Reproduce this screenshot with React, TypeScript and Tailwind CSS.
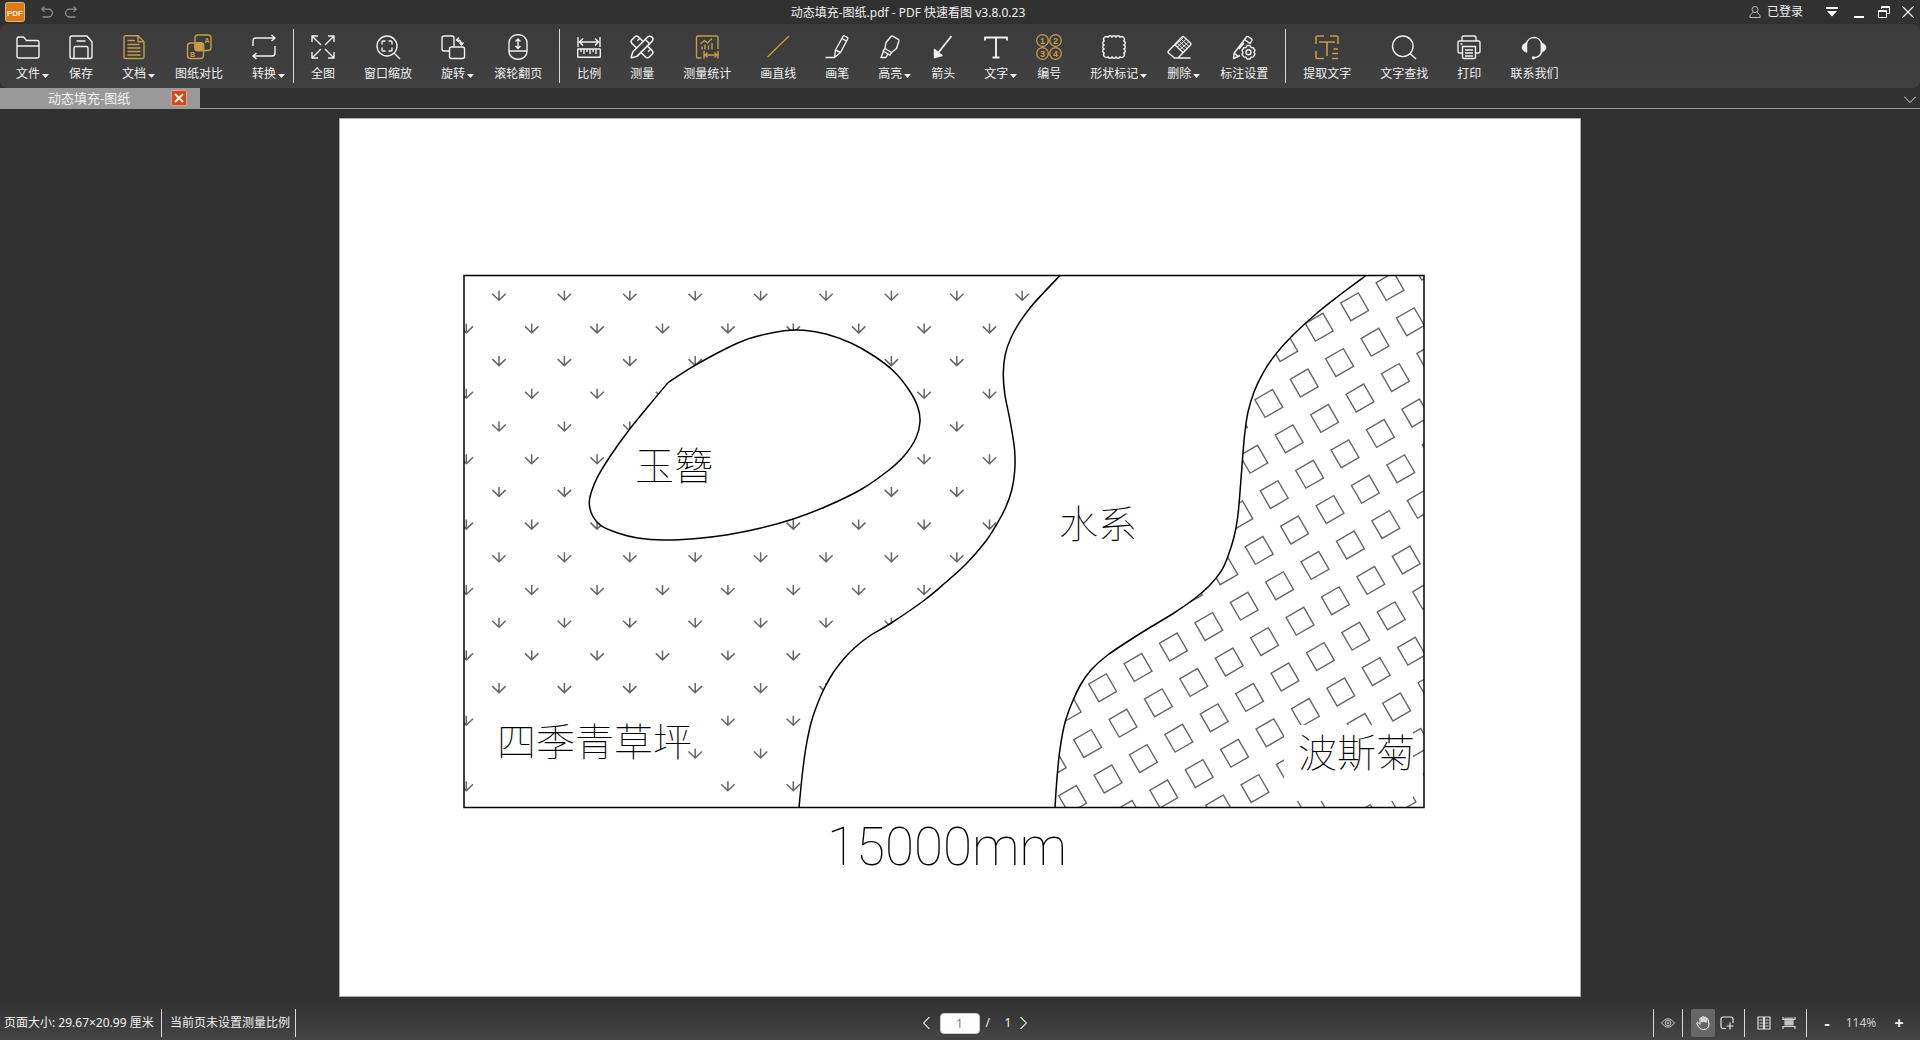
import React, { useState } from "react";
import { PencilRuler } from "lucide-react";
import clsx from "clsx";

type Point = [number, number];

interface Tool {
  label: string;
  icon: React.ReactNode;
  gold?: boolean;
  menu?: boolean;
}

const Icon: React.FC<{ children: React.ReactNode }> = ({ children }) => (
  <svg
    viewBox="0 0 26 26"
    className="h-[26px] w-[26px]"
    fill="none"
    stroke="currentColor"
    strokeWidth="1.4"
    strokeLinejoin="round"
    aria-hidden="true"
  >
    {children}
  </svg>
);

const fileTools: Tool[] = [
  {
    label: "文件",
    menu: true,
    icon: (
      <Icon>
        <path d="M2 22V5a2 2 0 0 1 2-2h4.500l3 3.500H22a2 2 0 0 1 2 2V22a2 2 0 0 1-2 2H4a2 2 0 0 1-2-2zM2 12h22" />
      </Icon>
    ),
  },
  {
    label: "保存",
    icon: (
      <Icon>
        <path d="M4 2h15l5 6v14.500a2 2 0 0 1-2 2H4a2 2 0 0 1-2-2V4a2 2 0 0 1 2-2zM6 24.500V14a1.500 1.500 0 0 1 1.500-1.500h11A1.500 1.500 0 0 1 20 14v10.500M8.500 7h9" />
      </Icon>
    ),
  },
  {
    label: "文档",
    gold: true,
    menu: true,
    icon: (
      <Icon>
        <path d="M4.500 1.700H17l6 6V23a1.500 1.500 0 0 1-1.500 1.500h-17A1.500 1.500 0 0 1 3 23V3.200a1.500 1.500 0 0 1 1.500-1.500zM17 1.700v6h6M6.500 6.500H14M6.500 10.500h12M6.500 14h13M6.500 17.500h13M6.500 21h13" />
      </Icon>
    ),
  },
  {
    label: "图纸对比",
    gold: true,
    icon: (
      <Icon>
        <rect x="9" y="1" width="16" height="15.500" rx="3" />
        <rect x="1.500" y="9" width="16" height="15.500" rx="3" />
        <rect x="9" y="9" width="8.500" height="7.500" rx="2" fill="currentColor" />
        <text x="18.500" y="8.500" fontSize="7" fontWeight="700" fill="currentColor" stroke="none" fontFamily="Liberation Sans, sans-serif">
          A
        </text>
        <text x="4" y="22.500" fontSize="7" fontWeight="700" fill="currentColor" stroke="none" fontFamily="Liberation Sans, sans-serif">
          B
        </text>
      </Icon>
    ),
  },
  {
    label: "转换",
    menu: true,
    icon: (
      <Icon>
        <path d="M2 12V7a3 3 0 0 1 3-3h19M20.500 1L24 4l-3.500 3M24 12v7a3 3 0 0 1-3 3H2M5.500 19L2 22l3.500 3" />
      </Icon>
    ),
  },
];

const viewTools: Tool[] = [
  {
    label: "全图",
    icon: (
      <Icon>
        <path d="M2 8V2h6M2 2l9 9M18 2h6v6M24 2l-9 9M2 18v6h6M2 24l9-9M24 18v6h-6M24 24l-9-9" />
      </Icon>
    ),
  },
  {
    label: "窗口缩放",
    icon: (
      <Icon>
        <circle cx="12" cy="12" r="10" />
        <path d="M19 19l6 6M7 10.500V8a1 1 0 0 1 1-1h2.500M13.500 7H16a1 1 0 0 1 1 1v2.500M17 13.500V16a1 1 0 0 1-1 1h-2.500M10.500 17H8a1 1 0 0 1-1-1v-2.500" />
      </Icon>
    ),
  },
  {
    label: "旋转",
    menu: true,
    icon: (
      <Icon>
        <path d="M9 17H4a2 2 0 0 1-2-2V4a2 2 0 0 1 2-2h8a2 2 0 0 1 2 2v8.500" />
        <rect x="9.500" y="13" width="15" height="11.500" rx="2" />
        <path d="M17 6c3 0 4.500 1.500 4.500 4.500M19 3.500L16.500 6 19 8M19.500 8.500l2 2.500 2-2.500" />
      </Icon>
    ),
  },
  {
    label: "滚轮翻页",
    icon: (
      <Icon>
        <rect x="4" y="0.800" width="18" height="24.400" rx="8" />
        <path d="M4 17h18M13 5v9.500M10.500 7.500L13 5l2.500 2.500M10.500 12l2.500 2.500 2.500-2.500" />
      </Icon>
    ),
  },
];

const markTools: Tool[] = [
  {
    label: "比例",
    icon: (
      <Icon>
        <path d="M2 3v10M24 3v10M3.500 8h19M7 4.500L3.500 8 7 11.500M19 4.500L22.500 8 19 11.500" />
        <rect x="1.700" y="15" width="22.600" height="8.300" rx="0.500" />
        <path d="M5 15v3M8 15v5M11 15v3M14 15v5M17 15v3M20 15v5" />
      </Icon>
    ),
  },
  {
    label: "测量",
    icon: <PencilRuler size={26} strokeWidth={1.4} aria-hidden="true" />,
  },
  {
    label: "测量统计",
    gold: true,
    icon: (
      <Icon>
        <path d="M7.500 24H4a1.500 1.500 0 0 1-1.500-1.500V3.500A1.500 1.500 0 0 1 4 2h18.500A1.500 1.500 0 0 1 24 3.500V15M6.500 10l4-3.500 3 2.500 4.500-4.500M8 12.500v3M11 10.500v5M14.500 11.500v4M18 9v6.500" />
        <path d="M10 17v7.500M24 17v7.500M11 21h12M13.500 18.500L11 21l2.500 2.500M20.500 18.500L23 21l-2.500 2.500" />
      </Icon>
    ),
  },
  {
    label: "画直线",
    gold: true,
    icon: (
      <Icon>
        <path d="M2.500 23L24 2" />
      </Icon>
    ),
  },
  {
    label: "画笔",
    icon: (
      <Icon>
        <path d="M1.500 23.500h9l1-7.500 7.500-13.500a1.200 1.200 0 0 1 1.600-.5l2.600 1.400a1.200 1.200 0 0 1 .5 1.600L16.500 18.500l-6 5M11.500 16l5 2.500M18 4.500l5 2.800" />
      </Icon>
    ),
  },
  {
    label: "高亮",
    menu: true,
    icon: (
      <Icon>
        <path d="M8 14.500l1-6L14 2.500a1.500 1.500 0 0 1 1.800-.4l5.400 3.200a1.500 1.500 0 0 1 .7 1.700l-2.400 7.500-5 4zM8 14.500l6.500 4-1.500 2.700-7-4.200zM6.500 17.500L4 23.500h5l1.800-3.500" />
      </Icon>
    ),
  },
  {
    label: "箭头",
    icon: (
      <Icon>
        <path d="M21.500 2L8 19" strokeWidth="1.800" />
        <path d="M4.500 23.500V15.500l7.500 6z" fill="currentColor" />
      </Icon>
    ),
  },
  {
    label: "文字",
    menu: true,
    icon: (
      <Icon>
        <path d="M2 6.500V3.500h22v3M13 3.500v20M9.500 23.500h7" strokeWidth="1.900" />
      </Icon>
    ),
  },
  {
    label: "编号",
    gold: true,
    icon: (
      <Icon>
        {["1", "2", "3", "4"].map((n, i) => {
          const cx = i % 2 ? 19.5 : 6.5;
          const cy = i > 1 ? 19.5 : 6.5;
          return (
            <g key={n}>
              <circle cx={cx} cy={cy} r="5.800" strokeWidth="1.300" />
              <text
                x={cx}
                y={cy + 3}
                textAnchor="middle"
                fontSize="9"
                fontWeight="700"
                fill="currentColor"
                stroke="none"
                fontFamily="Liberation Sans, sans-serif"
              >
                {n}
              </text>
            </g>
          );
        })}
      </Icon>
    ),
  },
  {
    label: "形状标记",
    menu: true,
    icon: (
      <Icon>
        <path d="M3.200 7A2.700 2.700 0 0 1 7 3.200a2.100 2.100 0 0 1 4 0a2.100 2.100 0 0 1 4 0a2.100 2.100 0 0 1 4 0A2.700 2.700 0 0 1 22.800 7a2.100 2.100 0 0 1 0 4a2.100 2.100 0 0 1 0 4a2.100 2.100 0 0 1 0 4A2.700 2.700 0 0 1 19 22.800a2.100 2.100 0 0 1-4 0a2.100 2.100 0 0 1-4 0a2.100 2.100 0 0 1-4 0A2.700 2.700 0 0 1 3.200 19a2.100 2.100 0 0 1 0-4a2.100 2.100 0 0 1 0-4a2.100 2.100 0 0 1 0-4z" />
      </Icon>
    ),
  },
  {
    label: "删除",
    menu: true,
    icon: (
      <Icon>
        <path d="M8.500 24l-6-5a1.500 1.500 0 0 1 0-2L16 3a1.500 1.500 0 0 1 2 0l6.500 6a1.500 1.500 0 0 1 0 2L12 24H7.500M12 24h12.500M8.500 10.500l8.500 8" />
        <path
          d="M11 9l8 7.500M13 7l8 7.500M15 5l8 7.500M20 5.500L11.500 13M22.500 8L14 15.500M17 4L9.500 11"
          strokeWidth="1"
        />
      </Icon>
    ),
  },
  {
    label: "标注设置",
    icon: (
      <Icon>
        <path d="M9 21.500l-2 1-4.500 2 .7-5.500L15.500 3a1.500 1.500 0 0 1 2-.3l3 2.200a1.500 1.500 0 0 1 .3 2L19 9.500M3.200 19l4 3.500M13.500 5.500l5.500 4M13 9L8 15" />
        <path d="M16 11.500h3l1 2 2.200.2 1.800 2.800-1 1.800 1 1.900-1.800 2.700-2.200.2-1 1.900h-3l-1-1.900-2.200-.2-1.800-2.700 1-1.900-1-1.800 1.800-2.800 2.200-.2z" />
        <circle cx="17.500" cy="18.200" r="2.500" />
      </Icon>
    ),
  },
];

const textTools: Tool[] = [
  {
    label: "提取文字",
    gold: true,
    icon: (
      <Icon>
        <path
          d="M2 10V3.500A1.500 1.500 0 0 1 3.500 2H10M16 2h6.500A1.500 1.500 0 0 1 24 3.500V10M2 17v6a1.500 1.500 0 0 0 1.500 1.500H10M5 8h16M13 8v14M19.500 15H24M18 19.500h6M18 24.500h6"
          strokeWidth="1.600"
        />
      </Icon>
    ),
  },
  {
    label: "文字查找",
    icon: (
      <Icon>
        <circle cx="11.800" cy="12.300" r="10.300" />
        <path d="M19 19.500l6 5.500" />
      </Icon>
    ),
  },
  {
    label: "打印",
    icon: (
      <Icon>
        <path d="M6 7V3.500A1.500 1.500 0 0 1 7.500 2h11A1.500 1.500 0 0 1 20 3.500V7M6 19H3.500A1.500 1.500 0 0 1 2 17.500v-9A1.500 1.500 0 0 1 3.500 7h19A1.500 1.500 0 0 1 24 8.500v9a1.500 1.500 0 0 1-1.500 1.500H20M6.500 12.500h13V23a1.500 1.500 0 0 1-1.500 1.500H8A1.500 1.500 0 0 1 6.500 23zM9 16h8M9 19h8M9 22h8M4.500 10h2" />
      </Icon>
    ),
  },
  {
    label: "联系我们",
    icon: (
      <Icon>
        <path d="M5.500 9.500a7.700 7.700 0 0 1 15 0v7c0 4.500-3 7-8 7.500" />
        <path d="M6 8.500v10C2.500 17.500 1 15.500 1 13.500S2.500 9.500 6 8.500zM20 8.500v10c3.500-1 5-3 5-5s-1.500-4-5-5z" fill="currentColor" strokeWidth="0.500" />
        <circle cx="12.500" cy="23.800" r="1.400" fill="currentColor" strokeWidth="0.500" />
      </Icon>
    ),
  },
];

// Outlines on the sheet, in sheet units
const leftBank: Point[] = [
  [1059, 275.5], [1041.7, 293.7], [1030, 306.7], [1019, 321.7], [1010, 337.7],
  [1004.3, 354.3], [1002.3, 373.3], [1003.7, 393.3], [1008.3, 416.7], [1011, 431.7],
  [1013.7, 451], [1013.7, 471], [1010.7, 490.3], [1004.7, 507.3], [996, 523.7],
  [984, 542.3], [965, 564], [944, 583], [923, 600.5], [889.5, 623.5],
  [870, 635], [855, 646.5], [844, 657.5], [832, 673], [822, 691],
  [815.7, 706], [810, 723], [804.5, 750], [801, 777], [798, 807.5],
];

const rightBank: Point[] = [
  [1365, 275.5], [1340, 294], [1316.7, 312.5], [1290, 337], [1273, 356.4],
  [1261.7, 373.6], [1253, 392], [1247, 412], [1244, 431.4], [1241.7, 456.4],
  [1239, 492], [1236.7, 517], [1233, 537], [1226.7, 557], [1220, 571.4],
  [1208, 586], [1195, 597.5], [1173, 613], [1140, 633], [1106.7, 655],
  [1090, 670], [1080, 684], [1071.7, 701], [1064, 722.5], [1059, 749],
  [1056, 778], [1054, 807.5],
];

const plantBed: Point[] = [
  [667, 382.7], [694, 365.3], [736.7, 343], [760, 335.3], [783, 330.7],
  [803, 330.3], [825, 334], [850, 343], [873, 356], [893, 371.5],
  [908, 390], [916.7, 406.7], [919, 421.7], [915, 438], [903, 456],
  [886.7, 471], [860, 489.5], [825, 506.5], [793, 518.7], [760, 528],
  [726.7, 534.7], [693, 538.7], [663, 540], [636.7, 538], [616.7, 533],
  [600, 525.7], [591.7, 516], [588.3, 504.3], [590, 493], [596.7, 476.7],
  [610, 455], [626.7, 431.7], [650, 403], [667, 382.7],
];

const smoothPath = (pts: Point[]) => {
  let d = `M${pts[0][0]} ${pts[0][1]}`;
  for (let i = 0; i < pts.length - 1; i++) {
    const p0 = pts[Math.max(i - 1, 0)];
    const p1 = pts[i];
    const p2 = pts[i + 1];
    const p3 = pts[Math.min(i + 2, pts.length - 1)];
    const c1 = [p1[0] + (p2[0] - p0[0]) / 6, p1[1] + (p2[1] - p0[1]) / 6];
    const c2 = [p2[0] - (p3[0] - p1[0]) / 6, p2[1] - (p3[1] - p1[1]) / 6];
    d += `C${c1[0]} ${c1[1]} ${c2[0]} ${c2[1]} ${p2[0]} ${p2[1]}`;
  }
  return d;
};

const leftPath = smoothPath(leftBank);
const rightPath = smoothPath(rightBank);
const bedPath = smoothPath(plantBed);

// Grass marks: staggered rows
const grass: Point[] = [];
for (let row = 0; row < 16; row++) {
  for (let col = 0; col < 10; col++) {
    grass.push([498 + col * 65.4 - (row % 2) * 32.7, 300.7 + row * 32.7]);
  }
}

// Paving squares: grid turned by 30 degrees
const squares: Point[] = [];
for (let i = -4; i < 20; i++) {
  for (let j = -8; j < 20; j++) {
    const x = 1389 - 35.4 * i + 20.4 * j;
    const y = 286.4 + 20.4 * i + 35.4 * j;
    if (x > 1030 && x < 1445 && y > 250 && y < 830) {
      squares.push([x, y]);
    }
  }
}

const sheetLabels = [
  { text: "玉簪", x: 634, y: 480 },
  { text: "水系", x: 1058, y: 538 },
  { text: "四季青草坪", x: 496, y: 756 },
  { text: "波斯菊", x: 1297, y: 767 },
];

const Drawing: React.FC = () => (
  <svg viewBox="338 118 1242 879" className="block h-full w-full" role="img" aria-label="动态填充-图纸">
    <defs>
      <clipPath id="lawn">
        <path d={`${leftPath}L463 807.5V275.500z`} />
      </clipPath>
      <clipPath id="paving">
        <path d={`${rightPath}H1423V275.500z`} />
      </clipPath>
    </defs>

    <g clipPath="url(#lawn)" fill="none" stroke="#666" strokeWidth="1.500">
      {grass.map(([x, y]) => (
        <path key={`${x}-${y}`} d={`M${x} ${y - 10}v10M${x - 6.7} ${y - 7}l6.700 6.500l6.700-6.500`} />
      ))}
    </g>
    <g clipPath="url(#paving)" fill="none" stroke="#666" strokeWidth="1.400">
      {squares.map(([x, y]) => (
        <rect
          key={`${x}-${y}`}
          x={x - 10.2}
          y={y - 10.2}
          width="20.400"
          height="20.400"
          transform={`rotate(-30 ${x} ${y})`}
        />
      ))}
    </g>

    {/* Clear the hatch behind the labels */}
    <rect x="488" y="705" width="199" height="95" fill="#fff" />
    <rect x="1283" y="725" width="129" height="76" fill="#fff" />

    <g fill="none" stroke="#000" strokeWidth="1.500">
      <path d={bedPath} fill="#fff" />
      <path d={leftPath} />
      <path d={rightPath} />
      <rect x="463" y="275.500" width="960" height="532" />
    </g>

    <g fill="#000" fontWeight="100" fontSize="39" fontFamily="'Noto Sans CJK SC', sans-serif">
      {sheetLabels.map((l) => (
        <text key={l.text} x={l.x} y={l.y}>
          {l.text}
        </text>
      ))}
    </g>
    <text x="826" y="865" fill="#000" fontSize="53" fontWeight="100" fontFamily="Roboto, sans-serif">
      15000mm
    </text>
  </svg>
);

const ToolGroup: React.FC<{ tools: Tool[] }> = ({ tools }) => (
  <>
    {tools.map((tool) => (
      <button key={tool.label} type="button" className="flex flex-col items-center px-[14px] pt-[6px] hover:bg-white/10">
        <span className={clsx("-mx-px", tool.gold ? "text-[#c69c46]" : "text-[#f0f0f0]")}>{tool.icon}</span>
        <span className="mt-1 flex items-center whitespace-nowrap text-xs leading-5">
          {tool.label}
          {tool.menu && (
            <svg viewBox="0 0 7 4" className="-mr-[9px] mt-[3px] ml-[2px] h-1 w-[7px]" aria-hidden="true">
              <path d="M0 0h7L3.500 4z" fill="currentColor" />
            </svg>
          )}
        </span>
      </button>
    ))}
  </>
);

const ToolDivider = () => <span className="mx-[2px] my-[5px] w-px self-stretch bg-[#d8d8d8]" />;

const TitleBar: React.FC = () => (
  <header className="flex h-6 shrink-0 items-center text-xs">
    <div className="flex w-20 items-center pl-[5px]">
      <svg viewBox="0 0 20 20" className="h-5 w-5" aria-hidden="true">
        <rect x="0.500" y="0.500" width="19" height="19" rx="2" fill="#e07a10" stroke="#c9b8a4" />
        <text
          x="10"
          y="13.500"
          textAnchor="middle"
          fontSize="8"
          fontWeight="700"
          fill="#fff3dc"
          fontFamily="Liberation Sans, sans-serif"
        >
          PDF
        </text>
      </svg>
      <button type="button" aria-label="撤销" className="ml-4 text-[#8c8c8c]">
        <svg viewBox="0 0 12 12" className="h-3 w-3" fill="none" stroke="currentColor" strokeWidth="1.300">
          <path d="M3.500 0.500L0.800 3.200l2.700 2.700M1 3.200h6.500a3.800 3.800 0 0 1 0 7.800H1.500" />
        </svg>
      </button>
      <button type="button" aria-label="重做" className="ml-3 text-[#8c8c8c]">
        <svg viewBox="0 0 12 12" className="h-3 w-3" fill="none" stroke="currentColor" strokeWidth="1.300">
          <path d="M8.500 0.500l2.700 2.700-2.700 2.700M11 3.200H4.500a3.800 3.800 0 0 0 0 7.800h6" />
        </svg>
      </button>
    </div>
    <h1 className="flex-1 pt-[2px] text-center">动态填充-图纸.pdf - PDF 快速看图 v3.8.0.23</h1>
    <div className="flex w-[184px] items-center justify-end gap-3 pr-[6px]">
      <button type="button" className="mr-[11px] flex items-center gap-[6px] whitespace-nowrap">
        <svg viewBox="0 0 12 12" className="h-3 w-3 text-[#bbb]" fill="none" stroke="currentColor" aria-hidden="true">
          <circle cx="6" cy="3.500" r="3" />
          <path d="M4 6.500C2 7.500.8 9 .8 11.500h10.400C11.200 9 10 7.500 8 6.500" />
        </svg>
        已登录
      </button>
      <button type="button" aria-label="菜单" className="mr-1">
        <svg viewBox="0 0 12 12" className="h-3 w-3" fill="#fff">
          <path d="M0 1h12v2H0zM1 5h10l-5 5.500z" />
        </svg>
      </button>
      <button type="button" aria-label="最小化">
        <svg viewBox="0 0 12 12" className="h-3 w-3" fill="#fff">
          <path d="M0 10h10v2H0z" />
        </svg>
      </button>
      <button type="button" aria-label="还原">
        <svg viewBox="0 0 12 12" className="h-3 w-3" fill="none" stroke="#fff">
          <path d="M3.500 3V.5h8v7H9M3.500 1.500h8" />
          <path d="M.5 4.500h8v7h-8zM.5 5.500h8" />
        </svg>
      </button>
      <button type="button" aria-label="关闭">
        <svg viewBox="0 0 12 12" className="h-3 w-3" fill="none" stroke="#fff" strokeWidth="1.200">
          <path d="M0 0l12 12M12 0L0 12" />
        </svg>
      </button>
    </div>
  </header>
);

const TabBar: React.FC = () => (
  <div className="flex h-[21px] shrink-0 items-center border-b border-[#999]">
    <div className="flex h-full w-[200px] items-center justify-between bg-[#999] pr-[13px] pl-12 text-[13px]">
      <span className="pt-px whitespace-nowrap">动态填充-图纸</span>
      <button
        type="button"
        aria-label="关闭标签"
        className="flex h-4 w-4 items-center justify-center rounded-xs border border-[#f0a080] bg-[#cf4b18]"
      >
        <svg viewBox="0 0 10 10" className="h-[10px] w-[10px]" fill="none" stroke="#fff" strokeWidth="1.800">
          <path d="M1 1l8 8M9 1L1 9" />
        </svg>
      </button>
    </div>
    <button type="button" aria-label="全部标签" className="mr-1 ml-auto pt-[3px]">
      <svg viewBox="0 0 12 7" className="h-[7px] w-3" fill="none" stroke="#e5e5e5">
        <path d="M0 .5l6 6 6-6" />
      </svg>
    </button>
  </div>
);

const StatusDivider = () => <span className="h-7 w-px bg-[#d8d8d8]" />;

const StatusBar: React.FC = () => {
  const [page, setPage] = useState("1");
  const [tool, setTool] = useState("hand");

  return (
    <footer className="flex h-10 shrink-0 items-center justify-between bg-linear-to-b from-[#313131] to-[#444] pt-[6px] text-xs whitespace-nowrap">
      <div className="flex items-center">
        <span className="min-w-[161px] pr-[3px] pl-1">页面大小: 29.67×20.99 厘米</span>
        <StatusDivider />
        <span className="pr-[5px] pl-2">当前页未设置测量比例</span>
        <StatusDivider />
      </div>

      <div className="flex items-center">
        <button type="button" aria-label="上一页">
          <svg viewBox="0 0 7 12" className="h-3 w-[7px]" fill="none" stroke="#e0e0e0" strokeWidth="1.200">
            <path d="M6.500 0l-6 6 6 6" />
          </svg>
        </button>
        <input
          aria-label="页码"
          value={page}
          onChange={(e) => setPage(e.target.value)}
          className="ml-[10px] h-[21px] w-10 rounded-sm border border-[#ccc] bg-white text-center text-[#6a7f96]"
        />
        <span className="w-6 pl-[6px]">/</span>
        <span className="w-4 pl-px">1</span>
        <button type="button" aria-label="下一页">
          <svg viewBox="0 0 7 12" className="h-3 w-[7px]" fill="none" stroke="#e0e0e0" strokeWidth="1.200">
            <path d="M.5 0l6 6-6 6" />
          </svg>
        </button>
      </div>

      <div className="flex items-center">
        <StatusDivider />
        <button type="button" aria-label="护眼" className="px-[7px]">
          <svg viewBox="0 0 14 10" className="h-[10px] w-[14px]" fill="none" stroke="#ccc">
            <path d="M.5 5C3 2 5 .8 7 .8S11 2 13.500 5C11 8 9 9.200 7 9.200S3 8 .5 5z" />
            <circle cx="7" cy="5" r="2.800" />
            <circle cx="7" cy="5" r=".8" />
          </svg>
        </button>
        <StatusDivider />
        <button
          type="button"
          aria-label="手型"
          onClick={() => setTool("hand")}
          className={clsx("ml-2 flex h-7 w-6 items-center justify-center rounded-xs", tool === "hand" && "bg-[#666]")}
        >
          <svg viewBox="0 0 14 14" className="h-[14px] w-[14px]" fill="none" stroke="#fff" strokeLinecap="round">
            <path d="M4 7.500V2.800a1 1 0 0 1 2 0V6M6 5.500V1.600a1 1 0 0 1 2 0V5.500M8 5.500V2a1 1 0 0 1 2 0v4M10 6V3.500a1 1 0 0 1 2 0L13 8c0 3.500-2 5.500-5.500 5.500C4 13.500 3 11.500.8 7.800.5 6.500 1.500 6 2.300 6.800L4 8.500" />
          </svg>
        </button>
        <button
          type="button"
          aria-label="框选"
          onClick={() => setTool("select")}
          className={clsx("flex h-7 w-6 items-center justify-center rounded-xs", tool === "select" && "bg-[#666]")}
        >
          <svg viewBox="0 0 14 14" className="h-[14px] w-[14px]" fill="none" stroke="#e5e5e5" strokeWidth="1.200">
            <path d="M6 12.500H3A2 2 0 0 1 1 10.500V3a2 2 0 0 1 2-2h8a2 2 0 0 1 2 2v4M10 6.500v7M6.500 10h7" />
          </svg>
        </button>
        <span className="w-[5px]" />
        <StatusDivider />
        <button type="button" aria-label="双页" className="pl-3">
          <svg viewBox="0 0 14 14" className="h-[14px] w-[14px]" fill="none" stroke="#ddd" strokeWidth="1.200">
            <path d="M1 1h5.500v12H1zM7.500 1H13v12H7.500zM2.500 4h3M2.500 7h3M2.500 10h3M8.500 4h3M8.500 7h3M8.500 10h3" />
          </svg>
        </button>
        <button type="button" aria-label="连续" className="pr-[10px] pl-[11px]">
          <svg viewBox="0 0 14 14" className="h-[14px] w-[14px]" fill="none" stroke="#ddd" strokeWidth="1.200">
            <path d="M2.500 1.500h9v8h-9z" fill="#aaa" stroke="none" />
            <path d="M1 1v2.500h12V1M2.500 6h9M2.500 8h9M1 13v-2.500h12V13" />
          </svg>
        </button>
        <StatusDivider />
        <button type="button" aria-label="缩小" className="ml-[14px] w-3 text-base leading-5 font-bold">
          -
        </button>
        <span className="w-14 text-center text-[#ccc]">114%</span>
        <button type="button" aria-label="放大" className="mr-[15px] ml-1 w-3 text-base leading-5 font-bold">
          +
        </button>
      </div>
    </footer>
  );
};

const App: React.FC = () => {
  return (
    <div className="flex h-screen flex-col bg-[#313131] font-['Noto_Sans','Noto_Sans_CJK_SC',sans-serif] text-[#f0f0f0]">
      <TitleBar />
      <nav
        aria-label="工具栏"
        className="flex h-16 shrink-0 items-center gap-px overflow-hidden rounded-lg bg-linear-to-b from-[#3b3b3b] to-[#414141] pl-[2px]"
      >
        <ToolGroup tools={fileTools} />
        <ToolDivider />
        <ToolGroup tools={viewTools} />
        <ToolDivider />
        <ToolGroup tools={markTools} />
        <ToolDivider />
        <ToolGroup tools={textTools} />
      </nav>
      <TabBar />
      <main className="flex min-h-0 flex-1 justify-center pt-[9px] pb-[3px]">
        <div className="aspect-[1242/879] h-full bg-white ring-1 ring-[#aaa] ring-inset">
          <Drawing />
        </div>
      </main>
      <StatusBar />
    </div>
  );
};

export default App;
